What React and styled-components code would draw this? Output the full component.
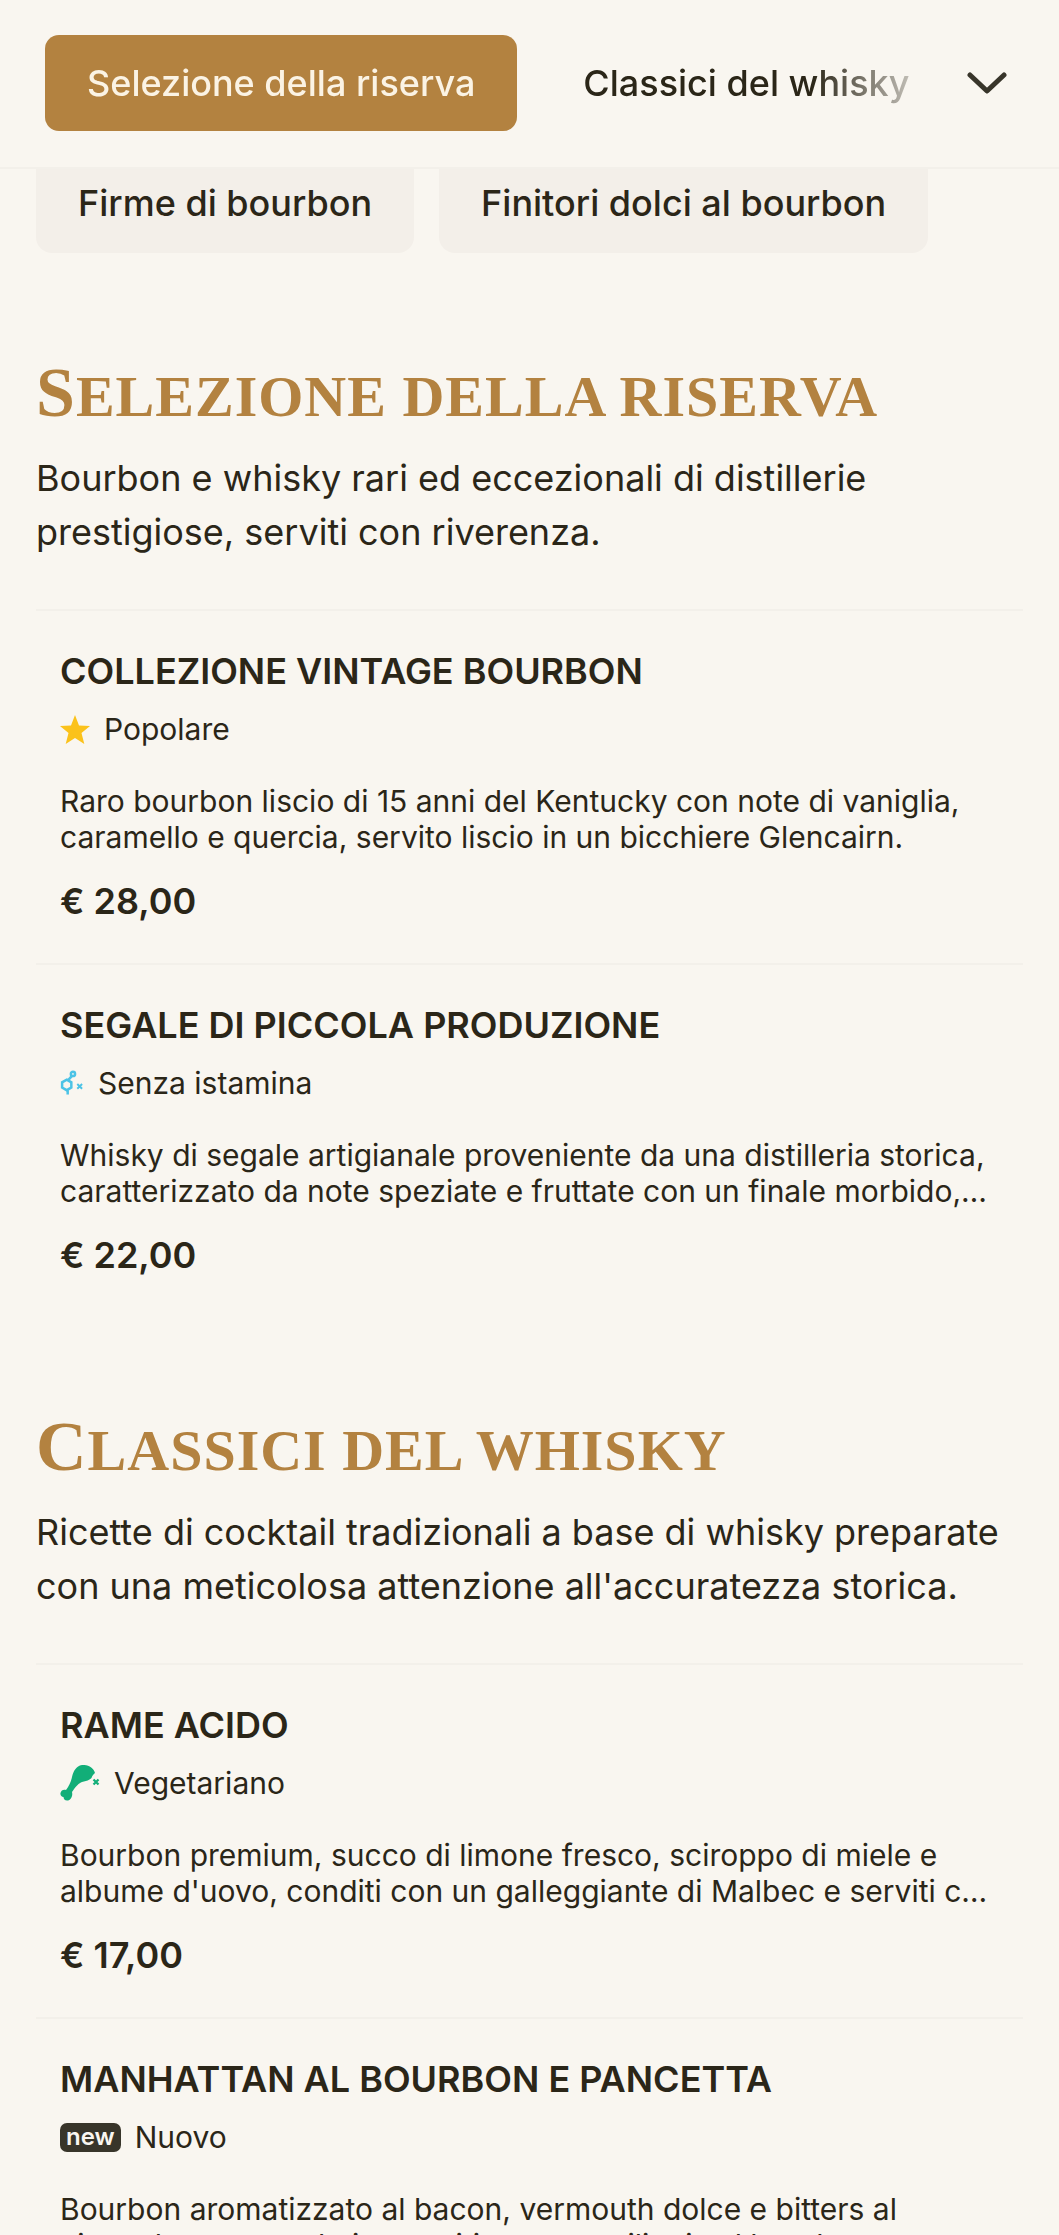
import React from 'react';
import styled, { createGlobalStyle } from 'styled-components';

const GlobalStyle = createGlobalStyle`
  html, body {
    margin: 0;
    padding: 0;
    background: #f9f6f0;
  }
  #root {
    height: 2235px;
    overflow: hidden;
  }
`;

const sections = [
  {
    title: 'Selezione della riserva',
    description: 'Bourbon e whisky rari ed eccezionali di distillerie prestigiose, serviti con riverenza.',
    items: [
      {
        name: 'COLLEZIONE VINTAGE BOURBON',
        tag: 'star',
        label: 'Popolare',
        text: 'Raro bourbon liscio di 15 anni del Kentucky con note di vaniglia, caramello e quercia, servito liscio in un bicchiere Glencairn.',
        price: '€ 28,00',
      },
      {
        name: 'SEGALE DI PICCOLA PRODUZIONE',
        tag: 'histamine',
        label: 'Senza istamina',
        text: 'Whisky di segale artigianale proveniente da una distilleria storica, caratterizzato da note speziate e fruttate con un finale morbido, perfetto da gustare lentamente.',
        price: '€ 22,00',
      },
    ],
  },
  {
    title: 'Classici del whisky',
    description: "Ricette di cocktail tradizionali a base di whisky preparate con una meticolosa attenzione all'accuratezza storica.",
    items: [
      {
        name: 'RAME ACIDO',
        tag: 'veggie',
        label: 'Vegetariano',
        text: "Bourbon premium, succo di limone fresco, sciroppo di miele e albume d'uovo, conditi con un galleggiante di Malbec e serviti con ghiaccio fresco.",
        price: '€ 17,00',
      },
      {
        name: 'MANHATTAN AL BOURBON E PANCETTA',
        tag: 'new',
        label: 'Nuovo',
        text: 'Bourbon aromatizzato al bacon, vermouth dolce e bitters al cioccolato, mescolati e serviti con una ciliegia al bourbon.',
        price: '€ 19,00',
      },
    ],
  },
];

const StarIcon = () => (
  <svg width="30" height="29" viewBox="0 0 30 29">
    <path
      fill="#fbc21b"
      d="M15 0l4 10.400 11 .7-8.500 7 2.800 10.900-9.300-6-9.300 6 2.800-10.900-8.500-7 11-.7z"
    />
  </svg>
);

const HistamineIcon = () => (
  <svg width="24" height="26" viewBox="0 0 25 26" fill="none" stroke="#4cc3e6" strokeWidth="2.600">
    <circle cx="13.500" cy="3.500" r="2.200" />
    <path d="M12.500 5.500L8.500 10" />
    <path d="M7 9.500l4.800 2.800v5.500L7 20.500l-4.800-2.700v-5.500z" />
    <path d="M8 20.500V25" />
    <path d="M18 14l5 5M23 14l-5 5" strokeWidth="2" />
  </svg>
);

const VeggieIcon = () => (
  <svg width="40" height="36" viewBox="0 0 40 36">
    <path
      fill="#12ae78"
      d="M22 0C28-.5 34 3 35 8c-1.500 1-3 3-3.500 5C30 15 26 16 22 17c-3 1-6 4-10 10 1 4-1 8-4 8.500-3 .5-4.500-1.500-4.500-3.500-2 0-3.500-2-3-4C1 25 4 24 6 25c3-4 5-8 6-13C13.500 6 16 1 22 0z"
    />
    <path d="M33.500 14.500l5 5M38.500 14.500l-5 5" stroke="#12ae78" strokeWidth="2.200" fill="none" />
  </svg>
);

const ChevronIcon = () => (
  <svg width="40" height="23" viewBox="0 0 40 23" fill="none" stroke="#38352a" strokeWidth="5" strokeLinecap="round" strokeLinejoin="round">
    <path d="M3 3l17 16L37 3" />
  </svg>
);

const tagIcons = {
  star: <StarIcon />,
  histamine: <HistamineIcon />,
  veggie: <VeggieIcon />,
};

const TabBar = () => (
  <Header>
    <TabScroller>
      <Tab $active>Selezione della riserva</Tab>
      <Tab>Classici del whisky</Tab>
    </TabScroller>
    <ChevronButton>
      <ChevronIcon />
    </ChevronButton>
  </Header>
);

const MenuItem = ({ item }) => (
  <Item>
    <ItemName>{item.name}</ItemName>
    <TagRow>
      {item.tag === 'new' ? <NewBadge>new</NewBadge> : tagIcons[item.tag]}
      <span>{item.label}</span>
    </TagRow>
    <ItemText>{item.text}</ItemText>
    <Price>{item.price}</Price>
  </Item>
);

export default function App() {
  return (
    <Page>
      <GlobalStyle />
      <TabBar />
      <SubTabs>
        <SubTab>Firme di bourbon</SubTab>
        <SubTab>Finitori dolci al bourbon</SubTab>
      </SubTabs>
      {sections.map((section) => (
        <Section key={section.title}>
          <SectionTitle>{section.title}</SectionTitle>
          <SectionText>{section.description}</SectionText>
          <ItemList>
            {section.items.map((item) => (
              <MenuItem key={item.name} item={item} />
            ))}
          </ItemList>
        </Section>
      ))}
    </Page>
  );
}

const Page = styled.div`
  font-family: Inter, 'Liberation Sans', sans-serif;
  color: #2b2618;
  background: #f9f6f0;
`;

const Header = styled.header`
  display: flex;
  align-items: center;
  height: 169px;
  box-sizing: border-box;
  padding: 0 52px 1px 45px;
  border-bottom: 2px solid #f3f0ea;
  background: #f9f6f0;
`;

const TabScroller = styled.div`
  display: flex;
  flex: 1;
  gap: 24px;
  min-width: 0;
  overflow: hidden;
  -webkit-mask-image: linear-gradient(to right, #000 85%, transparent 100%);
  mask-image: linear-gradient(to right, #000 85%, transparent 100%);
`;

const Tab = styled.div`
  flex: none;
  height: 96px;
  padding: 0 42px;
  display: flex;
  align-items: center;
  border-radius: 14px;
  font-size: 36px;
  font-weight: 500;
  white-space: nowrap;
  background: ${({ $active }) => ($active ? '#b38240' : 'transparent')};
  color: ${({ $active }) => ($active ? '#fbf3e4' : '#2b2618')};
`;

const ChevronButton = styled.div`
  flex: none;
  display: flex;
  margin-left: 20px;
`;

const SubTabs = styled.div`
  display: flex;
  gap: 25px;
  padding: 0 36px;
`;

const SubTab = styled.div`
  height: 84px;
  padding: 0 42px 17px;
  box-sizing: border-box;
  display: flex;
  align-items: center;
  border-radius: 0 0 16px 16px;
  background: #f3efe9;
  font-size: 36px;
  font-weight: 500;
  white-space: nowrap;
`;

const Section = styled.section`
  padding: 0 36px;
  margin-top: 88px;
  &:first-of-type {
    margin-top: 98px;
  }
`;

const SectionTitle = styled.h2`
  margin: 0;
  font-family: 'Liberation Serif', serif;
  text-transform: uppercase;
  font-size: 58px;
  font-weight: 700;
  letter-spacing: 1px;
  line-height: 84px;
  color: #b38240;
  &::first-letter {
    font-size: 70px;
  }
`;

const SectionText = styled.p`
  margin: 12px 0 0;
  font-size: 36px;
  line-height: 54px;
`;

const ItemList = styled.div`
  margin-top: 50px;
`;

const Item = styled.article`
  padding: 38px 24px 40px;
  border-top: 2px solid #f3f0ea;
`;

const ItemName = styled.h3`
  margin: 0;
  font-size: 36px;
  font-weight: 600;
  line-height: 44px;
`;

const TagRow = styled.div`
  display: flex;
  align-items: center;
  gap: 14px;
  height: 40px;
  margin-top: 16px;
  font-size: 30px;
`;

const NewBadge = styled.span`
  padding: 0 6px;
  height: 29px;
  line-height: 27px;
  border-radius: 7px;
  background: #38352a;
  color: #f9f6f0;
  font-size: 24px;
  font-weight: 600;
`;

const ItemText = styled.p`
  margin: 34px 0 0;
  font-size: 30px;
  line-height: 36px;
  display: -webkit-box;
  -webkit-box-orient: vertical;
  -webkit-line-clamp: 2;
  overflow: hidden;
`;

const Price = styled.div`
  margin-top: 24px;
  font-size: 36px;
  font-weight: 600;
  line-height: 44px;
`;
